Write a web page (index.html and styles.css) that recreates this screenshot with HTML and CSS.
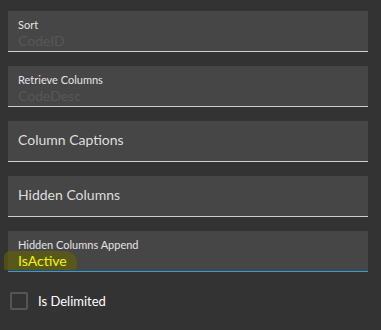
FILE: index.html
```html
<!DOCTYPE html>
<html>

<head>
    <meta charset="UTF-8">
    <title>Columns</title>
    <link rel="stylesheet" href="styles.css">
</head>

<body>
    <div class="panel">
        <div class="field">
            <label class="field-label">Sort</label>
            <span class="field-value placeholder">CodeID</span>
        </div>
        <div class="field">
            <label class="field-label">Retrieve Columns</label>
            <span class="field-value placeholder">CodeDesc</span>
        </div>
        <div class="field empty">
            <span class="field-title">Column Captions</span>
        </div>
        <div class="field empty">
            <span class="field-title">Hidden Columns</span>
        </div>
        <div class="field focused">
            <label class="field-label">Hidden Columns Append</label>
            <span class="field-value"><span class="marked">IsActive</span></span>
        </div>
        <div class="check-row">
            <span class="check-box"></span>
            <span class="check-text">Is Delimited</span>
        </div>
    </div>
</body>

</html>
```

FILE: styles.css
```css
body {
    margin: 0;
    background: #333333;
    font-family: Lato, "Open Sans", sans-serif;
    color: #dcdcdc;
}

.panel {
    display: flex;
    flex-direction: column;
    gap: 14px;
    padding: 11px 13px 0 8px;
}

.field {
    background: #464646;
    border-bottom: 1px solid #cfcfcf;
    display: flex;
    flex-direction: column;
    padding: 7px 0 0 10px;
    height: 33px;
}

.field.empty {
    justify-content: center;
    padding-top: 0;
    height: 36px;
    padding-bottom: 4px;
}

.field.focused {
    border-bottom-color: #2f9fd8;
}

.field-label {
    font-size: 11px;
    line-height: 14px;
    color: #e4e4e4;
}

.field-value {
    font-size: 14px;
    line-height: 18px;
}

.placeholder {
    color: #575757;
}

.field-title {
    font-size: 14px;
    color: #dedede;
}

.marked {
    color: #f4f400;
    background: rgba(100, 100, 0, 0.6);
    margin-left: -14px;
    padding: 1px 10px 1px 14px;
    border-radius: 6px 12px 4px 2px;
}

.check-row {
    display: flex;
    align-items: center;
    gap: 10px;
    margin-top: 6px;
    padding-left: 2px;
}

.check-box {
    width: 14px;
    height: 14px;
    border: 2px solid #555555;
    border-radius: 2px;
}

.check-text {
    font-size: 13px;
    color: #ffffff;
}
```
